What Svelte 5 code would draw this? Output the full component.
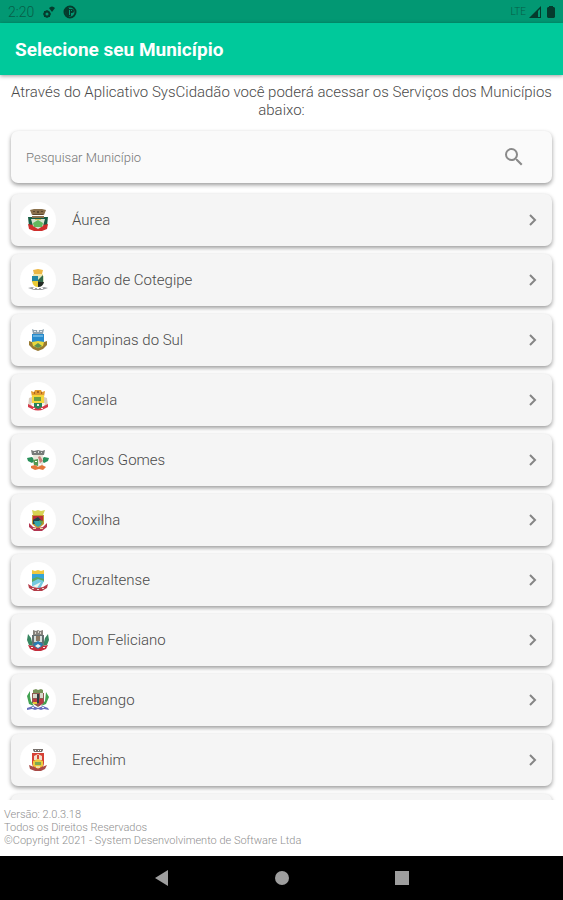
<script>
	let search = $state('');

	const crown = 'M5 3l3 1 1-2h6l1 2 3-1-1 6H6z';
	const ribbon = 'M2 16l4 2q6 3 12 0l4-2v3l-4 2q-6 3-12 0l-4-2z';
	const shield = 'M6 7h12v8q0 5-6 7-6-2-6-7z';

	const towns = [
		{
			name: 'Áurea',
			shapes: [
				['#8a704c', 'M4 2l4-1h8l4 1-2 5H6z'],
				['#5d4930', 'M7 3h2v1H7zM11 3h2v2h-2zM15 3h2v1h-2zM7 6h10v1H7z'],
				['#175d43', 'M2 9h20l-1 9-9 5-9-5z'],
				['#cf2e2c', 'M2 16l5 1 5 2 5-2 5-1-1 5-5 2H8l-5-2z'],
				['#8a704c', 'M6 8h12v2H6z'],
				['#d9e2d0', 'M5 11h14l-2 7-5 3-5-3z'],
				['#62b85f', 'M7 15l5-3 5 3-1 4H8z'],
				['#d6bf57', 'M9 11h6v1H9z']
			]
		},
		{
			name: 'Barão de Cotegipe',
			shapes: [
				['#edb744', 'M7 2l5-1 5 1-1 4H8z'],
				['#f4e7a8', 'M7 6h10v2H7z'],
				['#2386a3', 'M6 8h6v6H6z'],
				['#d9e5c3', 'M12 8h6v6h-6z'],
				['#31684c', 'M12 12l5-5v7h-5z'],
				['#e9ca35', 'M6 13h6v6q-5 0-6-6z'],
				['#242c25', 'M12 14h6q-1 5-6 5z'],
				['#9b9fa2', 'M2 20l4-1 3 1h6l3-1 4 1-3 1-3 1H8l-3-1z'],
				['#fff', 'M7 20h2v1H7zM11 20h2v1h-2zM15 20h2v1h-2z']
			]
		},
		{
			name: 'Campinas do Sul',
			shapes: [
				['#8fa3b0', 'M6 1l2 1h8l2-1-1 5H7z'],
				['#e4e9ec', 'M8 3h2v1H8zM11 2h2v2h-2zM14 3h2v1h-2z'],
				['#278bcd', 'M6 6h12v9H6z'],
				['#64b1df', 'M7 7h10v2H7z'],
				['#997a31', 'M3 13l3 1h12l3-1v4l-4 4-5 2-5-2-4-4z'],
				['#e9d83e', 'M6 14l6-1 6 1-1 4-5 2-5-2z'],
				['#5e9153', 'M8 18l4-3 4 3-4 2z']
			]
		},
		{
			name: 'Canela',
			shapes: [
				['#d8ccbd', 'M3 10l3-1v9l-4 1zM21 10l-3-1v9l4 1z'],
				['#e39b2f', crown],
				['#a86622', 'M8 4h1v2H8zM11 3h2v2h-2zM15 4h1v2h-1z'],
				['#f4d63b', 'M6 7h12v8H6z'],
				['#6ba044', 'M8 9h7v4H8z'],
				['#d53949', ribbon],
				['#258458', 'M8 15h8v4l-4 2-4-2z'],
				['#f4eee5', 'M5 15h3v2H5zM16 15h3v2h-3zM11 16h2v2h-2zM7 20h2v1H7zM15 20h2v1h-2z']
			]
		},
		{
			name: 'Carlos Gomes',
			shapes: [
				['#777b79', 'M5 2l3 1 4-1 4 1 3-1-1 5H6z'],
				['#d8dad6', 'M8 4h2v1H8zM12 3h1v2h-1zM15 4h1v1h-1z'],
				['#28905a', 'M1 10l5-1 3 3-3 3-4-2zM23 10l-5-1-3 3 3 3 4-2z'],
				['#e6e5d8', 'M7 7h10v10q-4 5-9 0z'],
				['#549951', 'M7 12l5-1v7l-4-1z'],
				['#c98078', 'M12 9l2-1 3 5-3 2z'],
				['#e3763b', 'M5 18l4-1 3 2 4-2 4 2-3 3-4-1-4 1-4-2z'],
				['#fff', 'M9 13h2v1H9zM13 16h2v1h-2z']
			]
		},
		{
			name: 'Coxilha',
			shapes: [
				['#d6d453', 'M6 2l3 1 3-1 3 1 4-1-2 5H7z'],
				['#c79731', 'M6 7h12v9l-6 5-6-5z'],
				['#b82e3a', 'M7 8h10v5H7z'],
				['#24434a', 'M7 12l5-3 4 4v3H7z'],
				['#33a6aa', 'M8 13h8l-1 4-3 2-3-2z'],
				['#6aa24b', 'M13 12l4 1-1 4z'],
				['#b33550', 'M3 15l4 4 5 1 5-1 4-4v4l-5 4H8l-5-4z'],
				['#ebdca0', 'M7 20h3v1H7zM14 20h3v1h-3z']
			]
		},
		{
			name: 'Cruzaltense',
			shapes: [
				['#f0c83e', 'M6 2l3 1 3-1 3 1 3-1v4H6z'],
				['#35a4d7', 'M6 6h12v7H6z'],
				['#5ca960', 'M6 11l5-2 7 2v3H6z'],
				['#74c9df', 'M6 14l6-3 6 2-4 8-8-3z'],
				['#ecf4ee', 'M7 18l8-4-4 6z'],
				['#b43c48', 'M2 16l5 3 5 1 5-1 5-3-1 4-5 3H8l-5-3z'],
				['#e9d7d1', 'M6 20h2v1H6zM11 21h2v1h-2zM16 20h2v1h-2z']
			]
		},
		{
			name: 'Dom Feliciano',
			shapes: [
				['#88837e', 'M7 2l3 1 2-1 2 1 3-1v5H7z'],
				['#d9d4cc', 'M9 4h1v2H9zM12 3h1v2h-1zM14 4h1v2h-1z'],
				['#388661', 'M2 6l3 4 2 8-4-1-2-5zM22 6l-3 4-2 8 4-1 2-5z'],
				['#656f70', shield],
				['#d5dddb', 'M8 8h8v6H8z'],
				['#8c7763', 'M10 8h4v5h-4z'],
				['#287ab3', 'M7 16l5-3 5 3-2 3-3 2-3-2z'],
				['#c42d3d', 'M2 17l5 1 5 3 5-3 5-1-2 4-5 2H9l-5-2z'],
				['#f4f1ed', 'M5 19h2v1H5zM17 19h2v1h-2zM9 18l3-2 3 2-3 2z']
			]
		},
		{
			name: 'Erebango',
			shapes: [
				['#42a251', 'M4 3L1 8l2 8 5 2-3-5-1-5zM20 4l3 5-3 7-5 2 4-5z'],
				['#78945b', 'M7 2l3-1 2 1 3-1 2 1v4H7z'],
				['#8e5a50', 'M6 5h12v10l-6 4-6-4z'],
				['#d7d8ca', 'M7 6h4v4H7zM14 5h3v5h-3z'],
				['#bb3943', 'M7 11h4v3H7zM12 11h5v4l-4 3z'],
				['#303e42', 'M11 6h2v9h-2z'],
				['#e9ca35', 'M7 14h4v2H7z'],
				['#6870bd', 'M1 20l6-2 5 2 5-2 5 2 1 2-5-1-3 1-3-1-3 1-3-1-5 1z'],
				['#eef0fb', 'M6 19h2v1H6zM16 19h2v1h-2z']
			]
		},
		{
			name: 'Erechim',
			shapes: [
				['#77706c', 'M7 1h10v1l-1 2H8L7 2z'],
				['#fff', 'M9 2h1v1H9zM12 2h1v1h-1zM14 2h1v1h-1z'],
				['#d64034', 'M6 5h12v10q0 5-6 7-6-2-6-7z'],
				['#f1dfcf', 'M8 8l4-2 4 2v4H8z'],
				['#d94933', 'M11 7h2v4h-2z'],
				['#ecc93e', 'M7 13l5-2 5 2v5l-5 3-5-3z'],
				['#7ea952', 'M9 14h6v3H9z'],
				['#a94a47', 'M3 17l5 2 4 2 4-2 5-2-2 4-4 2H9l-5-2z'],
				['#f2e0a0', 'M10 18h4v2h-4z']
			]
		}
	];

	let visible = $derived(
		towns.filter((town) => town.name.toLowerCase().includes(search.toLowerCase()))
	);
</script>

<div class="screen">
	<div class="status">
		<span class="clock">2:20</span>
		<svg width="14" height="14" viewBox="0 0 14 14">
			<circle cx="5" cy="9" r="2.5" fill="none" stroke="#053b2d" stroke-width="2" />
			<path d="M5 5v1M5 12v1M1 9h1M8 9h1M2 6l1 1M8 12l-1-1M2 12l1-1" stroke="#053b2d" />
			<path d="M7 3q3-3 6 0l-3 4z" fill="#053b2d" />
		</svg>
		<svg class="app-icon" width="14" height="14" viewBox="0 0 14 14">
			<circle cx="7" cy="7" r="5.5" fill="none" stroke="#053b2d" stroke-width="2" />
			<path d="M2 3h4v9q-5-2-4-9z" fill="#053b2d" />
			<path d="M6 4h3q2 0 2 2t-2 2H8v3H6z" fill="#053b2d" />
			<path d="M6 5h1v5H6zM8 5h1v1H8z" fill="#029873" />
		</svg>
		<span class="network">LTE</span>
		<svg width="12" height="12" viewBox="0 0 12 12">
			<path d="M0 12L12 0v12z" fill="#053b2d" />
			<path d="M9 5l2-2v8H9z" fill="#029873" />
		</svg>
		<svg class="battery" width="8" height="12" viewBox="0 0 8 12">
			<path d="M2 0h4v1h1l1 1v9l-1 1H1l-1-1V2l1-1h1z" fill="#053b2d" />
		</svg>
	</div>

	<header>
		<h1>Selecione seu Município</h1>
	</header>

	<p class="intro">
		Através do Aplicativo SysCidadão você poderá acessar os Serviços dos Municípios abaixo:
	</p>

	<div class="search">
		<input
			type="text"
			aria-label="Pesquisar Município"
			placeholder="Pesquisar Município"
			bind:value={search}
		/>
		<svg width="24" height="24" viewBox="0 0 24 24">
			<path
				fill="#8a8a8a"
				d="M15.5 14h-.79l-.28-.27A6.47 6.47 0 0 0 16 9.5 6.5 6.5 0 1 0 9.5 16c1.61 0 3.09-.59 4.23-1.57l.27.28v.79l5 4.99L20.49 19l-4.99-5zm-6 0C7.01 14 5 11.99 5 9.5S7.01 5 9.5 5 14 7.01 14 9.5 11.99 14 9.5 14z"
			/>
		</svg>
	</div>

	<ul class="towns">
		{#each visible as town}
			<li>
				<button type="button" class="town">
					<span class="crest">
						<svg width="24" height="24" viewBox="0 0 24 24">
							{#each town.shapes as [fill, d]}
								<path {d} {fill} />
							{/each}
						</svg>
					</span>
					<span class="name">{town.name}</span>
					<svg width="24" height="24" viewBox="0 0 24 24">
						<path d="M9 7l5 5-5 5" fill="none" stroke="#858585" stroke-width="2" />
					</svg>
				</button>
			</li>
		{/each}
		<li class="town" aria-hidden="true"></li>
	</ul>

	<footer>
		Versão: 2.0.3.18<br />
		Todos os Direitos Reservados<br />
		©Copyright 2021 - System Desenvolvimento de Software Ltda
	</footer>

	<nav>
		<button type="button" aria-label="Voltar">
			<svg width="16" height="16" viewBox="0 0 16 16"><path d="M1 8l13-8v16z" /></svg>
		</button>
		<button type="button" aria-label="Início">
			<svg width="16" height="16" viewBox="0 0 16 16"><circle cx="8" cy="8" r="7" /></svg>
		</button>
		<button type="button" aria-label="Recentes">
			<svg width="16" height="16" viewBox="0 0 16 16"><path d="M1 1h14v14H1z" /></svg>
		</button>
	</nav>
</div>

<style>
	:global(body) {
		margin: 0;
		background: #fff;
	}

	.screen {
		display: flex;
		flex-direction: column;
		height: 100vh;
		font-family: Roboto, sans-serif;
		font-weight: 300;
		color: #4a4a4a;
	}

	.screen svg {
		display: block;
		flex: none;
	}

	.status {
		display: flex;
		align-items: center;
		flex: none;
		height: 23px;
		padding: 0 8px;
		background: #029873;
		color: #075e48;
	}

	.clock {
		margin-right: 8px;
		font-size: 14px;
	}

	.app-icon {
		margin-left: 7px;
	}

	.network {
		margin-left: auto;
		margin-right: 3px;
		font-size: 10px;
	}

	.battery {
		margin-left: 6px;
	}

	header {
		display: flex;
		align-items: center;
		flex: none;
		height: 52px;
		padding: 0 15px;
		background: #00c99b;
		box-shadow: 0 1px 4px rgba(0, 0, 0, 0.4);
	}

	h1 {
		margin: 0;
		font-size: 19px;
		font-weight: 700;
		color: #fff;
	}

	.intro {
		margin: 8px 8px 12px;
		font-size: 15px;
		line-height: 18px;
		text-align: center;
	}

	.search,
	.town {
		box-sizing: border-box;
		height: 52px;
		border-radius: 7px;
		box-shadow: 0 2px 4px rgba(0, 0, 0, 0.4);
	}

	.search {
		display: flex;
		align-items: center;
		flex: none;
		margin: 0 11px;
		padding: 0 26px 0 15px;
		background: #fafafa;
	}

	input {
		flex: 1;
		min-width: 0;
		padding: 0;
		border: 0;
		outline: 0;
		background: none;
		font: inherit;
		font-size: 13px;
		color: #4a4a4a;
	}

	input::placeholder {
		color: #777;
		opacity: 1;
	}

	.towns {
		display: flex;
		flex: 1;
		flex-direction: column;
		gap: 8px;
		min-height: 0;
		margin: 0;
		padding: 11px 11px 0;
		overflow: hidden;
		list-style: none;
	}

	.town {
		display: flex;
		align-items: center;
		flex: none;
		width: 100%;
		padding: 0 7px 0 9px;
		border: 0;
		background: #f5f5f5;
		font: inherit;
		font-size: 15px;
		color: #4a4a4a;
		text-align: left;
	}

	.crest {
		display: grid;
		place-items: center;
		width: 36px;
		height: 36px;
		border-radius: 50%;
		background: #fff;
	}

	.name {
		flex: 1;
		margin-left: 16px;
	}

	footer {
		flex: none;
		padding: 8px 4px 9px;
		font-size: 11px;
		line-height: 13px;
		color: #8f8f8f;
	}

	nav {
		display: flex;
		align-items: center;
		justify-content: center;
		gap: 104px;
		flex: none;
		height: 44px;
		background: #000;
	}

	nav button {
		padding: 0;
		border: 0;
		background: none;
		fill: #9e9e9e;
	}
</style>
